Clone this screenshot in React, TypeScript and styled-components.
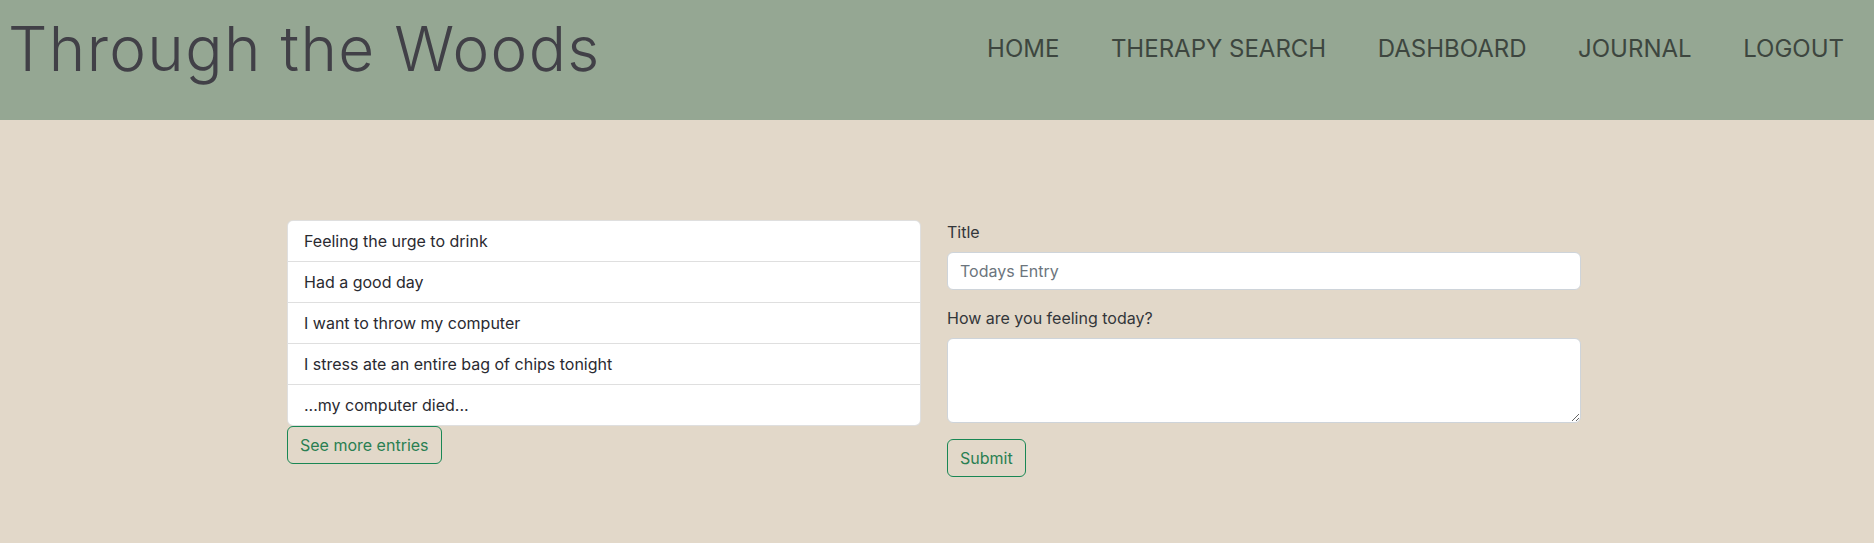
import React from "react";
import styled, { createGlobalStyle } from "styled-components";

const GlobalStyle = createGlobalStyle`
  * { box-sizing: border-box; }
  html, body { margin: 0; padding: 0; }
  body {
    background: #e2d8c9;
    font-family: "Inter", "Liberation Sans", sans-serif;
    font-size: 16px;
    line-height: 1.5;
    color: #212529;
    min-height: 543px;
  }
`;

const Header = styled.header`
  display: flex;
  justify-content: space-between;
  align-items: flex-start;
  height: 120px;
  padding: 0 30px 0 8px;
  background: #95a793;
`;

const Brand = styled.h1`
  margin: 13px 0 0;
  font-family: "Inter", "Liberation Sans", sans-serif;
  font-weight: 300;
  font-size: 62px;
  line-height: 72px;
  letter-spacing: 1.35px;
  color: #414047;
  white-space: nowrap;
`;

const Nav = styled.nav`
  display: flex;
  gap: 51.5px;
  margin-top: 31px;
`;

const NavLink = styled.a`
  font-family: "Inter", "Liberation Sans", sans-serif;
  font-size: 24px;
  line-height: 36px;
  font-weight: 400;
  color: #3d463f;
  text-decoration: none;
  text-transform: uppercase;
  white-space: nowrap;
  cursor: pointer;
`;

const Main = styled.main`
  display: flex;
  gap: 26px;
  padding: 100px 0 0 287px;
`;

const Column = styled.section`
  width: 634px;
  display: flex;
  flex-direction: column;
  align-items: flex-start;
`;

const EntryList = styled.ul`
  list-style: none;
  margin: 0;
  padding: 0;
  width: 100%;
  background: #fff;
  border: 1px solid rgba(0, 0, 0, 0.125);
  border-radius: 6px;
  overflow: hidden;
`;

const EntryItem = styled.li`
  padding: 8px 16px;
  font-size: 16px;
  line-height: 24px;
  color: #2a2a31;
  & + & {
    border-top: 1px solid rgba(0, 0, 0, 0.125);
  }
`;

const OutlineButton = styled.button`
  font-family: "Inter", "Liberation Sans", sans-serif;
  font-size: 16px;
  line-height: 24px;
  padding: 6px 12px;
  color: #2a7f52;
  background: transparent;
  border: 1px solid #198754;
  border-radius: 6px;
  cursor: pointer;
`;

const Field = styled.div`
  width: 100%;
  margin-bottom: 16px;
`;

const Label = styled.label`
  display: block;
  margin-bottom: 8px;
  font-size: 16px;
  line-height: 24px;
  color: #33363a;
`;

const inputBase = `
  display: block;
  width: 100%;
  padding: 6px 12px;
  font-family: "Inter", "Liberation Sans", sans-serif;
  font-size: 16px;
  line-height: 24px;
  color: #212529;
  background: #fff;
  border: 1px solid #ced4da;
  border-radius: 6px;
  outline: none;
  &::placeholder { color: #6c757d; }
`;

const TextInput = styled.input`
  ${inputBase}
  height: 38px;
`;

const TextArea = styled.textarea`
  ${inputBase}
  height: 85px;
  resize: vertical;
`;

const entries = [
  "Feeling the urge to drink",
  "Had a good day",
  "I want to throw my computer",
  "I stress ate an entire bag of chips tonight",
  "...my computer died...",
];

const links = ["Home", "Therapy Search", "Dashboard", "Journal", "Logout"];

export default function App() {
  return (
    <>
      <GlobalStyle />
      <Header>
        <Brand>Through the Woods</Brand>
        <Nav>
          {links.map((l) => (
            <NavLink key={l}>{l}</NavLink>
          ))}
        </Nav>
      </Header>
      <Main>
        <Column>
          <EntryList>
            {entries.map((e) => (
              <EntryItem key={e}>{e}</EntryItem>
            ))}
          </EntryList>
          <OutlineButton type="button">See more entries</OutlineButton>
        </Column>
        <Column as="form" onSubmit={(e: React.FormEvent) => e.preventDefault()}>
          <Field>
            <Label htmlFor="title">Title</Label>
            <TextInput id="title" placeholder="Todays Entry" />
          </Field>
          <Field>
            <Label htmlFor="feeling">How are you feeling today?</Label>
            <TextArea id="feeling" />
          </Field>
          <OutlineButton type="submit">Submit</OutlineButton>
        </Column>
      </Main>
    </>
  );
}
